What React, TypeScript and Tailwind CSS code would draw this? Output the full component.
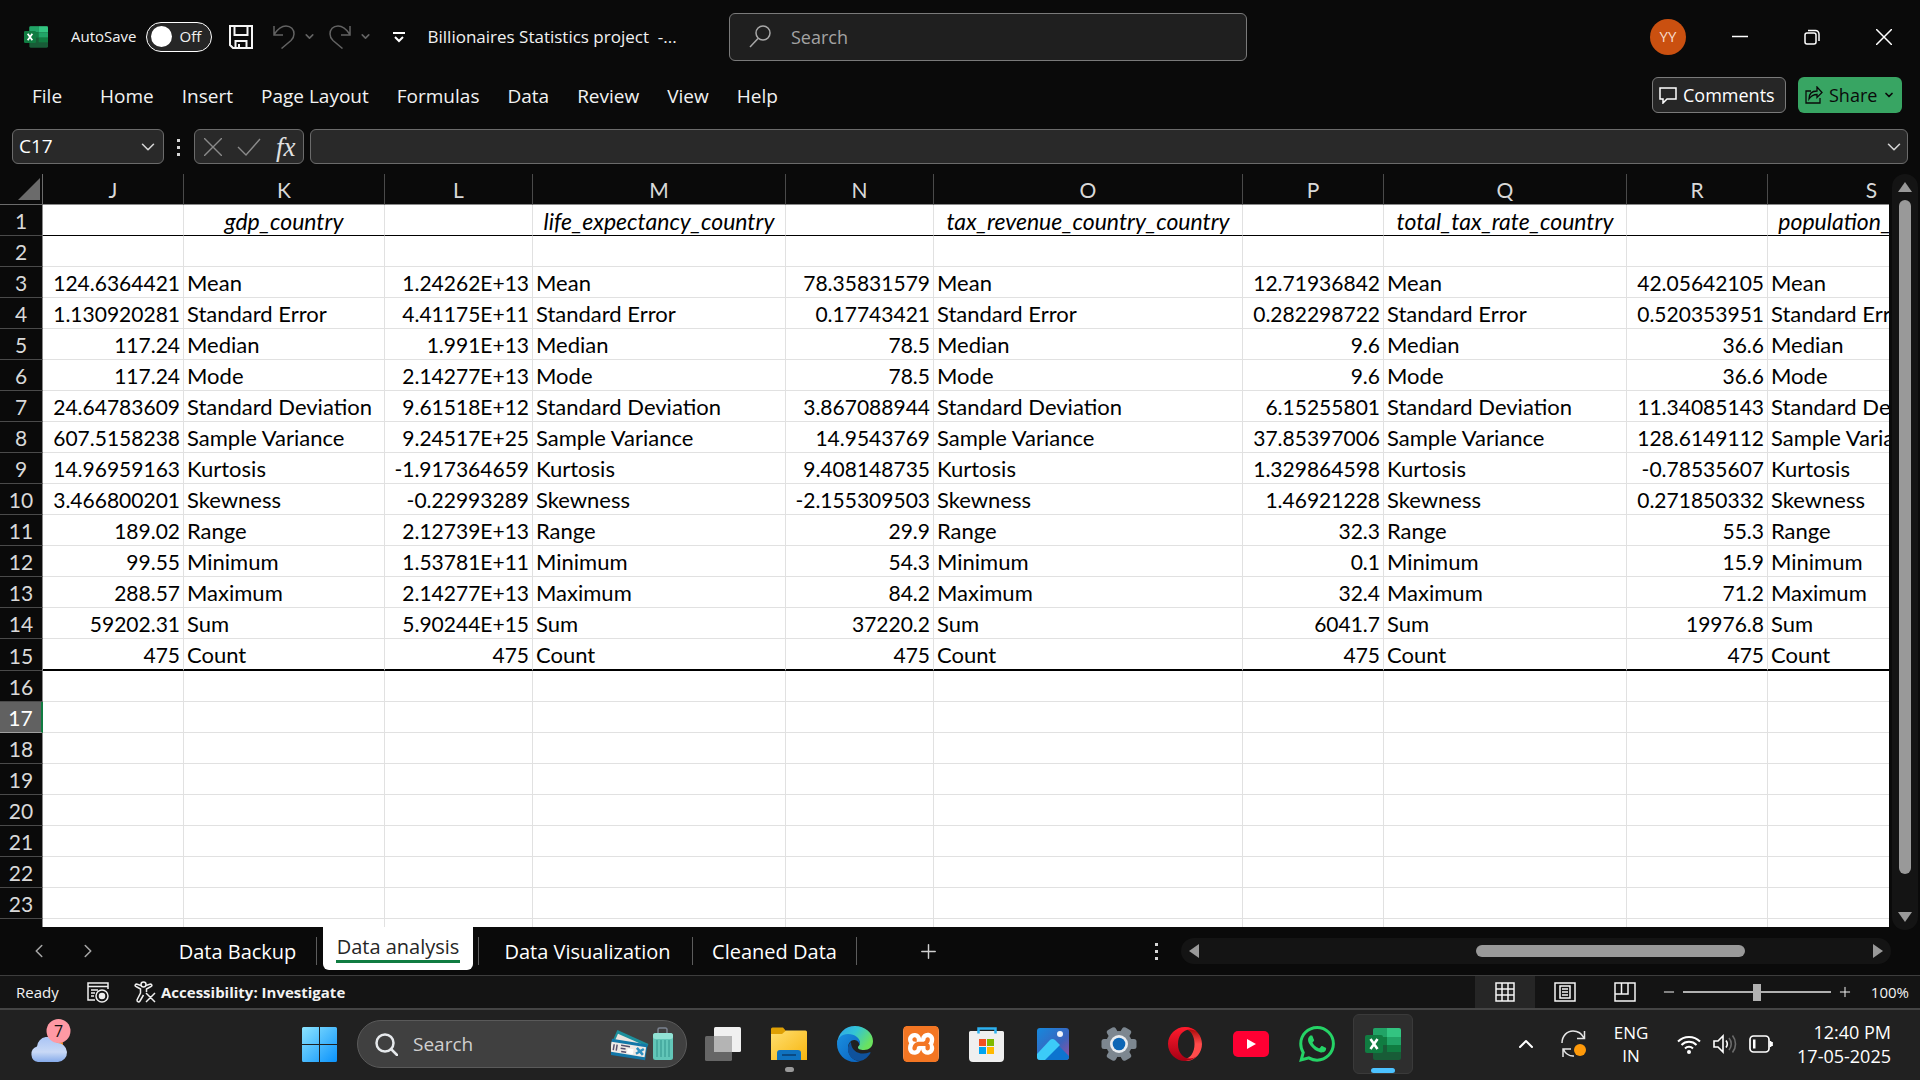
import type { ReactNode } from "react";
import { ChevronDown, ChevronLeft, ChevronRight, ChevronUp, Plus, Minus } from "lucide-react";
import { SiXampp } from "react-icons/si";

const menuTabs = ["File", "Home", "Insert", "Page Layout", "Formulas", "Data", "Review", "View", "Help"];

const columns = [
  { name: "J", width: "w-[141px]" },
  { name: "K", width: "w-[201px]" },
  { name: "L", width: "w-[148px]" },
  { name: "M", width: "w-[253px]" },
  { name: "N", width: "w-[148px]" },
  { name: "O", width: "w-[309px]" },
  { name: "P", width: "w-[141px]" },
  { name: "Q", width: "w-[243px]" },
  { name: "R", width: "w-[141px]" },
  { name: "S", width: "w-[208px]" },
];

const headings = ["", "gdp_country", "", "life_expectancy_country", "", "tax_revenue_country_country", "", "total_tax_rate_country", "", "population_country"];

const stats: [string, string, string, string, string, string][] = [
  ["Mean", "124.6364421", "1.24262E+13", "78.35831579", "12.71936842", "42.05642105"],
  ["Standard Error", "1.130920281", "4.41175E+11", "0.17743421", "0.282298722", "0.520353951"],
  ["Median", "117.24", "1.991E+13", "78.5", "9.6", "36.6"],
  ["Mode", "117.24", "2.14277E+13", "78.5", "9.6", "36.6"],
  ["Standard Deviation", "24.64783609", "9.61518E+12", "3.867088944", "6.15255801", "11.34085143"],
  ["Sample Variance", "607.5158238", "9.24517E+25", "14.9543769", "37.85397006", "128.6149112"],
  ["Kurtosis", "14.96959163", "-1.917364659", "9.408148735", "1.329864598", "-0.78535607"],
  ["Skewness", "3.466800201", "-0.22993289", "-2.155309503", "1.46921228", "0.271850332"],
  ["Range", "189.02", "2.12739E+13", "29.9", "32.3", "55.3"],
  ["Minimum", "99.55", "1.53781E+11", "54.3", "0.1", "15.9"],
  ["Maximum", "288.57", "2.14277E+13", "84.2", "32.4", "71.2"],
  ["Sum", "59202.31", "5.90244E+15", "37220.2", "6041.7", "19976.8"],
  ["Count", "475", "475", "475", "475", "475"],
];

function cellText(row: number, col: number): string {
  if (row === 1) return headings[col];
  const stat = stats[row - 3];
  if (!stat) return "";
  return col % 2 === 1 ? stat[0] : stat[col / 2 + 1];
}

function ExcelLogo({ className }: { className: string }) {
  return (
    <svg viewBox="0 0 36 36" className={className} aria-hidden="true">
      <rect x="8" y="2" width="28" height="32" rx="2" fill="#185c37" />
      <path d="M10 2h12v9H8V4a2 2 0 0 1 2-2z" fill="#21a366" />
      <path d="M22 2h12a2 2 0 0 1 2 2v7H22z" fill="#33c481" />
      <path d="M8 11h14v8H8z" fill="#107c41" />
      <path d="M22 11h14v8H22z" fill="#21a366" />
      <path d="M22 19h14v7H22z" fill="#107c41" />
      <rect x="0" y="9" width="18" height="18" rx="2" fill="#107c41" />
      <path d="M5.500 13l7 10M12.500 13l-7 10" stroke="#fff" strokeWidth="2.600" />
    </svg>
  );
}

function TitleBar() {
  return (
    <header className="flex h-[73px] shrink-0 items-center text-[#f2f2f2]">
      <div className="flex w-[729px] shrink-0 items-center pl-6">
        <ExcelLogo className="size-6" />
        <label htmlFor="autosave" className="ml-[23px] text-[15px]">AutoSave</label>
        <button id="autosave" role="switch" aria-checked="false" className="ml-[9px] flex h-[30px] w-[66px] items-center gap-2 rounded-full border border-white bg-[#262626] pl-1 text-[15px]">
          <span className="size-[21px] rounded-full bg-white" />
          Off
        </button>
        <button aria-label="Save" className="ml-[17px]">
          <svg viewBox="0 0 24 24" className="size-6" fill="none" stroke="#f5f5f5" strokeWidth="2"><path d="M1 1h22v22H4l-3-3zM5.500 1v9h13V1M6.500 23v-7h11v7M10 19v4" /></svg>
        </button>
        <button aria-label="Undo" className="ml-5 flex items-center gap-2">
          <svg viewBox="0 0 22 24" className="h-6 w-[22px]" fill="none" stroke="#636363" strokeWidth="1.500"><path d="M1 1v9h9M1 9.500C4 5 8 1 13 1s8 3.500 8 8c0 3-1.500 5-3 6.500L8.500 23.500" /></svg>
          <ChevronDown className="size-[13px] text-[#636363]" strokeWidth={3} />
        </button>
        <button aria-label="Redo" className="ml-[13px] flex items-center gap-2">
          <svg viewBox="0 0 22 24" className="h-6 w-[22px]" fill="none" stroke="#636363" strokeWidth="1.500"><path d="M21 1v9h-9M21 9.500C18 5 14 1 9 1S1 4.500 1 9c0 3 1.500 5 3 6.500l9.500 8" /></svg>
          <ChevronDown className="size-[13px] text-[#636363]" strokeWidth={3} />
        </button>
        <button aria-label="Customize Quick Access Toolbar" className="ml-[21px]">
          <svg viewBox="0 0 12 12" className="size-3" fill="none" stroke="#fff" strokeWidth="2"><path d="M0 2h12M2 6l4 4 4-4" /></svg>
        </button>
        <span className="ml-[23px] whitespace-pre text-[17px] leading-6">Billionaires Statistics project  -...</span>
      </div>
      <label className="flex h-12 max-w-[518px] grow items-center rounded-md border border-[#7a7a7a] bg-[#1f1f1f] pl-[19px]">
        <svg viewBox="0 0 22 24" className="h-6 w-[22px]" fill="none" stroke="#a8a8a8" strokeWidth="1.500"><circle cx="14" cy="8" r="7" /><path d="M9 13.500L1 22" /></svg>
        <input aria-label="Search" placeholder="Search" className="ml-5 min-w-0 grow bg-transparent text-lg outline-none placeholder:text-[#a3a3a3]" />
      </label>
      <div className="ml-auto flex items-center">
        <button aria-label="Account" className="mr-[18px] size-9 rounded-full bg-[#ca5010] text-[15px] text-[#f8dccb]">YY</button>
        <button aria-label="Minimize" className="flex h-12 w-[72px] items-center justify-center"><svg viewBox="0 0 16 16" className="size-4" stroke="#fff" strokeWidth="1.500"><path d="M0 7.500h16" /></svg></button>
        <button aria-label="Restore" className="flex h-12 w-[72px] items-center justify-center">
          <svg viewBox="0 0 16 16" className="size-4" fill="none" stroke="#fff" strokeWidth="1.500"><rect x="1" y="4" width="11" height="11" rx="2" /><path d="M4 1.500h7.500a3.500 3.500 0 0 1 3.500 3.500V12" /></svg>
        </button>
        <button aria-label="Close" className="flex h-12 w-[72px] items-center justify-center"><svg viewBox="0 0 16 16" className="size-4" stroke="#fff" strokeWidth="1.500"><path d="M0 0l16 16M16 0L0 16" /></svg></button>
      </div>
    </header>
  );
}

function MenuRow() {
  return (
    <nav className="flex h-11 shrink-0 items-center pr-[18px] pl-[18px] text-[#f2f2f2]">
      {menuTabs.map((tab) => (
        <button key={tab} className="px-3.5 pt-px text-[19px] leading-7 first:pr-6">{tab}</button>
      ))}
      <button className="ml-auto flex h-9 w-[134px] items-center gap-1.5 rounded-md border border-[#7a7a7a] bg-[#262626] pl-1.5 text-lg text-white">
        <svg viewBox="0 0 18 18" className="size-[18px] shrink-0" fill="none" stroke="#fff" strokeWidth="1.500"><path d="M1 2h16v11H8l-4 4v-4H1z" /></svg>
        Comments
      </button>
      <button className="ml-3 flex h-9 w-[104px] items-center gap-1.5 rounded-md bg-[#38a563] pl-[7px] text-lg text-[#0a0a0a]">
        <svg viewBox="0 0 18 18" className="size-[18px] shrink-0" fill="none" stroke="#0a0a0a" strokeWidth="1.300"><path d="M6 5H1v12h14v-5M4 13c0-5 3-8 8-8V1l5 5.500-5 5V8.500c-4 0-6 1.500-8 4.500z" /></svg>
        Share
        <ChevronDown className="size-3 shrink-0" strokeWidth={3.500} />
      </button>
    </nav>
  );
}

function FormulaBar() {
  return (
    <div className="flex shrink-0 items-center px-3 pt-3 pb-2.5">
      <div className="flex h-[35px] w-[152px] items-center rounded-md border border-[#6b6b6b] bg-[#292929] pr-1 pl-1.5">
        <input aria-label="Name Box" defaultValue="C17" className="min-w-0 grow bg-transparent text-[19px] text-white outline-none" />
        <ChevronDown className="size-[22px] shrink-0 text-[#d6d6d6]" strokeWidth={1.700} />
      </div>
      <svg viewBox="0 0 4 20" className="ml-[13px] h-5 w-1" fill="#d6d6d6"><path d="M0 2h3v3H0zM0 9h3v3H0zM0 16h3v3H0z" /></svg>
      <div className="ml-[13px] flex h-[35px] w-[110px] items-center rounded-md border border-[#6b6b6b] bg-[#292929] pl-[9px]">
        <button aria-label="Cancel"><svg viewBox="0 0 18 18" className="size-[18px]" stroke="#8a8a8a" strokeWidth="1.400"><path d="M0 0l18 18M18 0L0 18" /></svg></button>
        <button aria-label="Enter" className="ml-[15px]"><svg viewBox="0 0 24 18" className="h-[18px] w-6" fill="none" stroke="#8a8a8a" strokeWidth="1.400"><path d="M1 9l8 8L23 1" /></svg></button>
        <button aria-label="Insert Function" className="ml-[15px] font-['Liberation_Serif'] text-[27px] leading-7 font-normal text-[#e0e0e0] italic">fx</button>
      </div>
      <div className="ml-1.5 flex h-[35px] min-w-0 grow items-center rounded-md border border-[#6b6b6b] bg-[#292929] pr-0.5">
        <input aria-label="Formula Bar" className="min-w-0 grow bg-transparent px-2 text-lg text-white outline-none" />
        <ChevronDown className="size-[22px] shrink-0 text-[#d6d6d6]" strokeWidth={1.700} />
      </div>
    </div>
  );
}

function Grid() {
  const rows = Array.from({ length: 24 }, (_, i) => i + 1);
  return (
    <div className="min-h-0 min-w-0 grow overflow-hidden bg-white">
      <table className="w-max table-fixed border-separate border-spacing-0 font-['Lato',sans-serif] text-[21px] leading-[26px] text-black">
        <thead>
          <tr className="h-[31px] bg-[#0a0a0a] text-[#d9d9d9]">
            <th className="w-[43px] border-r border-b border-[#6b6b6b] p-0">
              <svg viewBox="0 0 24 24" className="ml-auto mr-0.5 size-[22px]"><path d="M24 0v24H0z" fill="#6b6b6b" /></svg>
            </th>
            {columns.map((c) => (
              <th key={c.name} className={`${c.width} border-r border-b border-r-[#4a4a4a] border-b-[#8a8a8a] p-0 pt-0.5 font-normal`}>{c.name}</th>
            ))}
          </tr>
        </thead>
        <tbody>
          {rows.map((r) => (
            <tr key={r} className={r === 15 ? "h-8" : "h-[31px]"}>
              <th className={`border-b p-0 pt-0.5 font-normal ${r === 17 ? "border-r-2 border-r-[#107c41] border-b-[#a0a0a0] bg-[#616161] text-white" : "border-r border-r-[#8a8a8a] border-b-[#4a4a4a] bg-[#0a0a0a] text-[#d9d9d9]"}`}>{r}</th>
              {columns.map((c, i) => (
                <td
                  key={c.name}
                  className={`overflow-hidden border-r border-r-[#e1e1e1] px-[3px] pt-0.5 pb-0 whitespace-nowrap ${
                    r === 1 ? "border-b border-b-black text-center text-[23px] italic" : r === 15 ? "border-b-2 border-b-black" : "border-b border-b-[#e1e1e1]"
                  } ${r > 1 ? (i % 2 === 0 ? "text-right" : "text-[22px]") : ""}`}
                >
                  {cellText(r, i)}
                </td>
              ))}
            </tr>
          ))}
        </tbody>
      </table>
    </div>
  );
}

function VerticalScroll() {
  return (
    <div className="mr-0.5 -mb-[3px] ml-[3px] flex w-[26px] shrink-0 flex-col items-center rounded-full bg-[#141414] pt-2 pb-2">
      <svg viewBox="0 0 14 10" className="h-2.5 w-3.5 shrink-0"><path d="M7 0l7 10H0z" fill="#999" /></svg>
      <div className="mt-2 mb-[38px] w-3 grow rounded-full bg-[#999]" />
      <svg viewBox="0 0 14 10" className="h-2.5 w-3.5 shrink-0"><path d="M0 0h14L7 10z" fill="#999" /></svg>
    </div>
  );
}

function Divider() {
  return <span className="h-7 w-px shrink-0 bg-[#5c5c5c]" />;
}

function SheetTabs() {
  return (
    <div className="flex h-12 shrink-0 items-center text-xl whitespace-nowrap text-white">
      <button aria-label="Previous sheet" className="ml-7 text-[#a6a6a6]"><ChevronLeft className="size-[22px]" strokeWidth={1.700} /></button>
      <button aria-label="Next sheet" className="ml-[27px] text-[#a6a6a6]"><ChevronRight className="size-[22px]" strokeWidth={1.700} /></button>
      <button className="w-[217px] pt-0.5 pl-[60px]">Data Backup</button>
      <Divider />
      <button className="ml-1.5 h-[43px] w-[150px] self-start rounded-b-md bg-white px-[13px] text-[#262626]">
        <span className="block border-b-[3px] border-[#107c41] text-center leading-[26px]">Data analysis</span>
      </button>
      <span className="w-[5px]" />
      <Divider />
      <button className="w-[213px] pt-0.5 pl-1">Data Visualization</button>
      <Divider />
      <button className="w-[163px] pt-0.5">Cleaned Data</button>
      <Divider />
      <button aria-label="New sheet" className="ml-[60px] text-[#d0d0d0]"><Plus className="size-[23px]" strokeWidth={1.500} /></button>
      <svg viewBox="0 0 4 20" className="ml-auto h-5 w-1" fill="#d6d6d6"><path d="M0 2h3v3H0zM0 9h3v3H0zM0 16h3v3H0z" /></svg>
      <div className="mr-[29px] ml-[22px] flex h-[26px] w-[710px] items-center rounded-full bg-[#141414] px-2">
        <svg viewBox="0 0 10 14" className="h-3.5 w-2.5"><path d="M10 0v14L0 7z" fill="#999" /></svg>
        <div className="mr-32 ml-auto h-3 w-[269px] rounded-full bg-[#999]" />
        <svg viewBox="0 0 10 14" className="h-3.5 w-2.5"><path d="M0 0v14l10-7z" fill="#999" /></svg>
      </div>
    </div>
  );
}

function StatusBar() {
  return (
    <div className="flex h-[33px] shrink-0 items-center border-t border-[#3d3d3d] bg-[#141414] text-[15px] text-[#f2f2f2]">
      <span className="ml-4 w-[71px]">Ready</span>
      <button aria-label="Record macro">
        <svg viewBox="0 0 22 22" className="size-[22px]" fill="none" stroke="#eee" strokeWidth="1.500"><path d="M8 19H1V2h20v6M1 5.500h20M4 9h7M4 12h4M4 15h3" /><circle cx="15" cy="15" r="6" /><circle cx="15" cy="15" r="2.500" fill="#eee" /></svg>
      </button>
      <button className="ml-[25px] flex items-center gap-[5px] font-bold">
        <svg viewBox="0 0 22 22" className="size-[22px]" fill="none" stroke="#eee" strokeWidth="1.500"><circle cx="9.500" cy="3.500" r="2.500" /><path d="M7 4.500L2.500 3C1 3 .5 5 2 5.500L6.500 8v4L3 19c0 2 2 2.500 3 1l3.500-6M12 4.500L16.500 3c1.500 0 2 2 .5 2.500L12.500 8v3M12 12l9 9M21 12l-9 9" /></svg>
        Accessibility: Investigate
      </button>
      <div className="ml-auto flex items-center self-stretch">
        <button aria-label="Normal view" className="flex w-[60px] items-center justify-center self-stretch bg-[#262626]">
          <svg viewBox="0 0 20 20" className="size-5" fill="none" stroke="#f5f5f5" strokeWidth="1.500"><path d="M1 1h18v18H1zM7 1v18M13 1v18M1 7h18M1 13h18" /></svg>
        </button>
        <button aria-label="Page layout view" className="flex w-[60px] items-center justify-center">
          <svg viewBox="0 0 22 20" className="h-5 w-[22px]" fill="none" stroke="#f5f5f5" strokeWidth="1.500"><path d="M1 1h20v18H1zM6 4h10v12H6zM8 7h6M8 10h6M8 13h6" /></svg>
        </button>
        <button aria-label="Page break preview" className="flex w-[60px] items-center justify-center">
          <svg viewBox="0 0 22 20" className="h-5 w-[22px]" fill="none" stroke="#f5f5f5" strokeWidth="1.500"><path d="M1 1h20v18H1zM1 12h13V1M7.500 1v11" /></svg>
        </button>
        <button aria-label="Zoom out" className="ml-1.5"><Minus className="size-4" strokeWidth={1.500} /></button>
        <input
          type="range"
          aria-label="Zoom"
          defaultValue={50}
          className="mx-1.5 h-[18px] w-[148px] appearance-none bg-[linear-gradient(#b0b0b0,#b0b0b0)] bg-[length:100%_2px] bg-center bg-no-repeat [&::-webkit-slider-thumb]:h-[17px] [&::-webkit-slider-thumb]:w-2 [&::-webkit-slider-thumb]:appearance-none [&::-webkit-slider-thumb]:bg-[#b0b0b0]"
        />
        <button aria-label="Zoom in"><Plus className="size-4" strokeWidth={1.500} /></button>
        <button className="w-[67px] pr-[11px] text-right">100%</button>
      </div>
    </div>
  );
}

function TaskButton({ label, children, mark }: { label: string; children: ReactNode; mark?: "open" | "active" }) {
  return (
    <button aria-label={label} className={`relative flex h-[60px] items-center justify-center ${mark === "active" ? "mx-[3px] w-[60px] rounded-md border border-[#3a3a3a] bg-[#2e2e2e]" : "w-[66px]"}`}>
      {children}
      {mark === "open" && <span className="absolute bottom-0.5 h-[5px] w-[9px] rounded-full bg-[#9a9a9a]" />}
      {mark === "active" && <span className="absolute bottom-0 h-[5px] w-6 rounded-full bg-[#4cc2ff]" />}
    </button>
  );
}

function Taskbar() {
  return (
    <footer className="flex h-[72px] shrink-0 items-center border-t-2 border-[#454545] bg-[#212121] pb-0.5 text-white">
      <button aria-label="Weather, 7 alerts" className="ml-[29px] pb-0.5">
        <svg viewBox="0 0 42 50" className="h-[50px] w-[42px]">
          <defs>
            <linearGradient id="cloud" x1="0" y1="0" x2="0" y2="1"><stop offset="0" stopColor="#a9c4f5" /><stop offset=".6" stopColor="#c9d9f6" /><stop offset="1" stopColor="#86abea" /></linearGradient>
          </defs>
          <circle cx="25" cy="26" r="9" fill="#f28a1c" />
          <path d="M9 44a8 8 0 0 1-1-15.500 10.500 10.500 0 0 1 20-3.500A9.500 9.500 0 0 1 29 44z" fill="url(#cloud)" />
          <circle cx="29.500" cy="13" r="12" fill="#ff99a4" />
          <text x="29.500" y="18.500" textAnchor="middle" fontSize="16" fontFamily="Open Sans" fill="#111">7</text>
        </svg>
      </button>
      <button aria-label="Start" className="ml-[215px] flex w-[66px] justify-center">
        <svg viewBox="0 0 35 35" className="size-[35px]">
          <defs><linearGradient id="win" x1="0" y1="0" x2="1" y2="1"><stop offset="0" stopColor="#8ce4ff" /><stop offset="1" stopColor="#0a92fb" /></linearGradient></defs>
          <path d="M1.500 0H17v17H0V1.500A1.500 1.500 0 0 1 1.500 0zM18 0h15.500A1.500 1.500 0 0 1 35 1.500V17H18zM0 18h17v17H1.500A1.500 1.500 0 0 1 0 33.500zM18 18h17v15.500a1.500 1.500 0 0 1-1.500 1.500H18z" fill="url(#win)" />
        </svg>
      </button>
      <label className="ml-[5px] flex h-12 w-[330px] items-center rounded-full border border-[#5a5a5a] bg-[#404040] pr-3 pl-[17px]">
        <svg viewBox="0 0 23 23" className="size-[23px] shrink-0" fill="none" stroke="#e6e9ec" strokeWidth="2.500"><circle cx="10" cy="10" r="8.500" /><path d="M16 16l6 6" strokeLinecap="round" /></svg>
        <input aria-label="Search Windows" placeholder="Search" className="ml-[15px] min-w-0 grow bg-transparent text-[19px] outline-none placeholder:text-[#d0d0d0]" />
        <svg viewBox="0 0 63 35" className="h-[35px] w-[63px] shrink-0">
          <g transform="rotate(24 6 4)"><rect x="6" y="3" width="34" height="13" fill="#1c8f9c" /><rect x="8" y="6" width="31" height="8" fill="#e9e4df" /></g>
          <g transform="rotate(9 2 12)"><rect x="1" y="12" width="36" height="16" fill="#1277a8" /><rect x="1" y="15" width="35" height="10" fill="#efeae6" /><path d="M4 17v6M7 17v6M11 17h9M11 20h5M12 23h5" stroke="#55506e" strokeWidth="1.500" /><rect x="18" y="19" width="6" height="5" fill="#fff" /><path d="M27 17l7 6M34 17l-7 6" stroke="#2d8fc0" strokeWidth="2.500" /></g>
          <path d="M47 7V2.500A1.500 1.500 0 0 1 48.500 1h6A1.500 1.500 0 0 1 56 2.500V7" fill="none" stroke="#7b8290" strokeWidth="1.500" />
          <rect x="42" y="6" width="20" height="27" rx="2.500" fill="#62c6b8" /><rect x="42" y="6" width="20" height="6" rx="2.500" fill="#92e2d5" />
          <path d="M46 13v17M50 13v17M54 13v17M58 13v17" stroke="#3a9d93" strokeWidth="1.200" />
        </svg>
      </label>
      <div className="ml-[3px] flex">
        <TaskButton label="Task View">
          <svg viewBox="0 0 36 36" className="size-9"><rect x="9" y="1" width="27" height="25" rx="1.500" fill="#f0f0f0" /><rect x="0" y="10" width="27" height="25" rx="1.500" fill="#666" /><path d="M9 10h18v16H9z" fill="#b4b4b4" /></svg>
        </TaskButton>
        <TaskButton label="File Explorer" mark="open">
          <svg viewBox="0 0 36 36" className="size-9">
            <defs><linearGradient id="fold" x1="0" y1="0" x2="1" y2="1"><stop offset="0" stopColor="#ffdf70" /><stop offset="1" stopColor="#f7b50e" /></linearGradient></defs>
            <path d="M0 3a1.500 1.500 0 0 1 1.500-1.500H12L15 5v6H0z" fill="#dfa004" /><path d="M0 8h11l4-3.500h19.500A1.500 1.500 0 0 1 36 6v28H0z" fill="url(#fold)" />
            <path d="M6 34v-7a3 3 0 0 1 3-3h18a3 3 0 0 1 3 3v7z" fill="#0f72bf" /><path d="M11 29h14" stroke="#0a4a83" strokeWidth="2" />
          </svg>
        </TaskButton>
        <TaskButton label="Microsoft Edge">
          <svg viewBox="0 0 36 36" className="size-9">
            <defs>
              <linearGradient id="edgeTop" x1="0" y1="0" x2="1" y2=".5"><stop offset="0" stopColor="#2f9fee" /><stop offset=".5" stopColor="#33c5d5" /><stop offset="1" stopColor="#6be25e" /></linearGradient>
              <linearGradient id="edgeSide" x1="0" y1="0" x2="1" y2="1"><stop offset="0" stopColor="#1a8fe0" /><stop offset="1" stopColor="#0a62be" /></linearGradient>
            </defs>
            <path d="M0 18C1 7 8 0 18 0s18 7 18 15c0 6-4 9-9 9-4 0-6.500-1-6-3 .3-1 2-1.500 2-4 0-3-4-6-9-6-7 0-13 3-14 7z" fill="url(#edgeTop)" />
            <path d="M0 18c0-6 5-10 11-10 7 0 12 4 12 9 0 1 0 1-.5 2C22 15 19 14 17 14c-3 0-6 3-6 8 0 7 5 13 12 13-2 .7-3 1-5 1C8 36 0 28 0 18z" fill="url(#edgeSide)" />
            <path d="M14 16c-5 3-5 18 9 19 5-1 8-4 10.500-8 .3-.7-.2-1-.8-.8C24 30 14 26 14 16z" fill="#0f529c" />
          </svg>
        </TaskButton>
        <TaskButton label="XAMPP">
          <span className="flex size-9 items-center justify-center rounded-md bg-white">
            <SiXampp className="size-9 rounded-sm text-[#f37623]" />
          </span>
        </TaskButton>
        <TaskButton label="Microsoft Store">
          <svg viewBox="0 0 36 36" className="size-9">
            <path d="M9.500 8V2.500h17V8" fill="none" stroke="#2cb1f0" strokeWidth="2.500" /><path d="M0 6.500A1.500 1.500 0 0 1 1.500 5h32A1.500 1.500 0 0 1 35 6.500V32a4 4 0 0 1-4 4H4a4 4 0 0 1-4-4z" fill="#efefef" /><path d="M9.500 7.500V5M26.500 7.500V5" stroke="#2cb1f0" strokeWidth="2.500" />
            <path d="M10 13h7v7h-7z" fill="#f25022" /><path d="M18 13h7v7h-7z" fill="#7fba00" /><path d="M10 21h7v7h-7z" fill="#00a4ef" /><path d="M18 21h7v7h-7z" fill="#ffb900" />
          </svg>
        </TaskButton>
        <TaskButton label="Photos">
          <svg viewBox="0 0 32 32" className="size-8">
            <defs>
              <linearGradient id="phBg" x1="0" y1="0" x2="1" y2="1"><stop offset="0" stopColor="#1589dd" /><stop offset=".6" stopColor="#3c63bd" /><stop offset="1" stopColor="#9b4f9f" /></linearGradient>
              <clipPath id="phClip"><rect width="32" height="32" rx="3" /></clipPath>
            </defs>
            <g clipPath="url(#phClip)"><rect width="32" height="32" fill="url(#phBg)" /><path d="M3 32l15-14q2-2 4 0l12 12v4z" fill="#0d74cf" /><path d="M-1 27l14-15q2.500-2 5 0l5 5L6 34h-8z" fill="#3ccbf8" /></g>
            <circle cx="23" cy="6" r="3" fill="#f0f4fa" />
          </svg>
        </TaskButton>
        <TaskButton label="Settings">
          <svg viewBox="0 0 36 36" className="size-9">
            <g fill="#7d8790">{[0, 60, 120, 180, 240, 300].map((a) => <rect key={a} x="13" y=".5" width="10" height="12" rx="2.500" transform={`rotate(${a + 30} 18 18)`} />)}<circle cx="18" cy="18" r="13" /></g>
            <circle cx="18" cy="18" r="9" fill="#e9ecef" /><circle cx="18" cy="18" r="6.300" fill="#0d66b5" />
          </svg>
        </TaskButton>
        <TaskButton label="Opera">
          <svg viewBox="0 0 36 36" className="size-9">
            <defs>
              <linearGradient id="opL" x1="0" y1="0" x2="0" y2="1"><stop offset="0" stopColor="#ff1b2d" /><stop offset="1" stopColor="#a70014" /></linearGradient>
              <linearGradient id="opR" x1="0" y1="0" x2="0" y2="1"><stop offset="0" stopColor="#9c0000" /><stop offset=".5" stopColor="#ff4b4b" /></linearGradient>
            </defs>
            <path d="M12 6.500C14 4.500 16 3.500 18.500 3.500c5 0 9 6.500 9 14.500s-4 14.500-9 14.500c-2.500 0-4.500-1-6.500-3 3 4 7 5.500 9 5.500 8-1.500 14-8.500 14-17S29 2.500 21 1c-2 0-6 1.500-9 5.500z" fill="url(#opR)" />
            <path d="M18 1C8.600 1 1 8.600 1 18s7.600 17 17 17c4.400 0 8.400-1.600 11.400-4.400-2 1.300-4.300 2-6.400 2-3.500 0-6.800-1.700-9-4.600C12.200 25.800 11 22.300 11 18.500v-1c0-3.800 1.200-7.300 3-9.500 2.200-2.900 5.500-4.600 9-4.600 2.300 0 4.500.7 6.400 2C26.400 2.600 22.400 1 18 1z" fill="url(#opL)" />
          </svg>
        </TaskButton>
        <TaskButton label="YouTube">
          <svg viewBox="0 0 36 26" className="h-[26px] w-9"><rect width="36" height="26" rx="5" fill="#ff0033" /><path d="M14 8l9 5-9 5z" fill="#fff" /></svg>
        </TaskButton>
        <TaskButton label="WhatsApp">
          <svg viewBox="0 0 24 24" className="size-9" fill="#25d366"><path d="M17.472 14.382c-.297-.149-1.758-.867-2.030-.967-.273-.099-.471-.148-.670.150-.197.297-.767.966-.940 1.164-.173.199-.347.223-.644.075-.297-.150-1.255-.463-2.390-1.475-.883-.788-1.480-1.761-1.653-2.059-.173-.297-.018-.458.130-.606.134-.133.298-.347.446-.520.149-.174.198-.298.298-.497.099-.198.050-.371-.025-.520-.075-.149-.669-1.612-.916-2.207-.242-.579-.487-.500-.669-.510-.173-.008-.371-.010-.570-.010-.198 0-.520.074-.792.372-.272.297-1.040 1.016-1.040 2.479 0 1.462 1.065 2.875 1.213 3.074.149.198 2.096 3.200 5.077 4.487.709.306 1.262.489 1.694.625.712.227 1.360.195 1.871.118.571-.085 1.758-.719 2.006-1.413.248-.694.248-1.289.173-1.413-.074-.124-.272-.198-.570-.347m-5.421 7.403h-.004a9.870 9.870 0 0 1-5.031-1.378l-.361-.214-3.741.982.998-3.648-.235-.374a9.860 9.860 0 0 1-1.510-5.260c.001-5.450 4.436-9.884 9.888-9.884 2.640 0 5.122 1.030 6.988 2.898a9.825 9.825 0 0 1 2.893 6.994c-.003 5.450-4.437 9.884-9.885 9.884m8.413-18.297A11.815 11.815 0 0 0 12.050 0C5.495 0 .160 5.335.157 11.892c0 2.096.547 4.142 1.588 5.945L.057 24l6.305-1.654a11.882 11.882 0 0 0 5.683 1.448h.005c6.554 0 11.890-5.335 11.893-11.893a11.821 11.821 0 0 0-3.480-8.413z" /></svg>
        </TaskButton>
        <TaskButton label="Excel" mark="active"><ExcelLogo className="size-9" /></TaskButton>
      </div>
      <div className="ml-auto flex items-center pr-[29px]">
        <button aria-label="Show hidden icons"><ChevronUp className="size-6" strokeWidth={2} /></button>
        <button aria-label="Updates" className="ml-[23px]">
          <svg viewBox="0 0 26 30" className="h-[30px] w-[26px]" fill="none" stroke="#e6e6e6" strokeWidth="1.500"><path d="M1 14C1 7 6 2 12 2c5 0 9 3 11 7M23.500 2v7.500H16M2 28v-8h8M2.500 20.500C4 24 8 27.500 13 27" /><circle cx="19" cy="21" r="6" fill="#ff9a0a" stroke="none" /></svg>
        </button>
        <button className="ml-6 w-10 text-center text-[17px] leading-[23px]">ENG<br />IN</button>
        <button aria-label="Network, volume and battery" className="ml-[26px] flex items-center gap-3">
          <svg viewBox="0 0 24 22" className="h-[22px] w-6" fill="none" stroke="#fff" strokeWidth="2"><path d="M1 8.500a15.500 15.500 0 0 1 22 0M4.500 12a10.500 10.500 0 0 1 15 0M8 15.500a5.700 5.700 0 0 1 8 0" /><circle cx="12" cy="19" r="2" fill="#fff" stroke="none" /></svg>
          <svg viewBox="0 0 24 22" className="h-[22px] w-6" fill="none" stroke="#fff" strokeWidth="1.600"><path d="M1 8v6h4l5 5V3L5 8zM13 7.500c1.500 2 1.500 5 0 7" /><path d="M16 5c3 3.500 3 8.500 0 12M19.500 2.500c4 5 4 12 0 17" stroke="#6b6b6b" /></svg>
          <svg viewBox="0 0 24 18" className="h-[18px] w-6" fill="none" stroke="#fff" strokeWidth="1.700"><rect x="1" y="1" width="19" height="16" rx="3.500" /><path d="M4 4.500h2.500v9H4z" fill="#fff" stroke="none" /><path d="M21.500 6v6M23 7v4" /></svg>
        </button>
        <button className="ml-3 w-[106px] text-right text-lg leading-6 whitespace-nowrap">12:40 PM<br />17-05-2025</button>
      </div>
    </footer>
  );
}

export default function App() {
  return (
    <div className="flex h-screen w-full flex-col overflow-hidden bg-[#0a0a0a] font-['Open_Sans',sans-serif]">
      <TitleBar />
      <MenuRow />
      <FormulaBar />
      <main className="flex min-h-0 grow">
        <Grid />
        <VerticalScroll />
      </main>
      <SheetTabs />
      <StatusBar />
      <Taskbar />
    </div>
  );
}
